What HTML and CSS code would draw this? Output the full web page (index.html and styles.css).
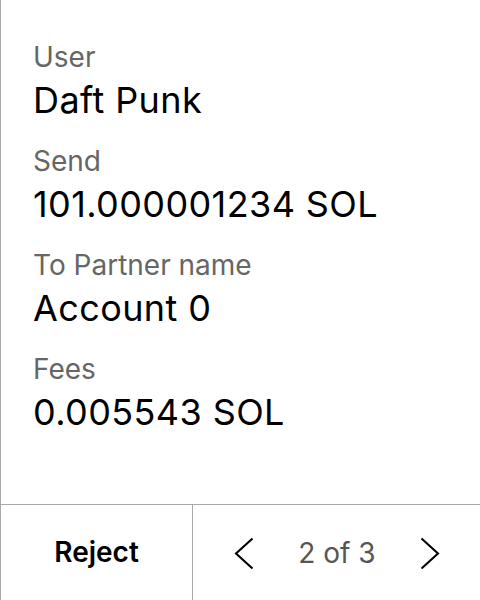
FILE: index.html
```html
<!DOCTYPE html>
<html>
<head>
<meta charset="utf-8">
<link rel="stylesheet" href="styles.css">
</head>
<body>
<div class="screen">
  <div class="fields">
    <div class="field"><div class="label">User</div><div class="value">Daft Punk</div></div>
    <div class="field"><div class="label">Send</div><div class="value">101.000001234 SOL</div></div>
    <div class="field"><div class="label">To Partner name</div><div class="value">Account 0</div></div>
    <div class="field"><div class="label">Fees</div><div class="value">0.005543 SOL</div></div>
  </div>
  <div class="footer">
    <div class="reject">Reject</div>
    <div class="nav">
      <svg class="chev" width="20" height="32" viewBox="0 0 20 32"><path d="M18.5 1.5 L2 16.5 L18.5 31.5" fill="none" stroke="#000" stroke-width="2.1"/></svg>
      <span class="page">2 of 3</span>
      <svg class="chev" width="20" height="32" viewBox="0 0 20 32"><path d="M1.5 1.5 L18 16.5 L1.5 31.5" fill="none" stroke="#000" stroke-width="2.1"/></svg>
    </div>
  </div>
</div>
</body>
</html>
```
FILE: styles.css
```css
html, body { margin: 0; padding: 0; background: #fff; }
body { font-family: Inter, "Noto Sans", sans-serif; color: #000; }
.screen {
  width: 480px; height: 600px; box-sizing: border-box;
  border-left: 1px solid #a8a8a8;
  display: flex; flex-direction: column;
}
.fields { flex: 1; padding: 41px 0 0 32px; display: flex; flex-direction: column; gap: 23px; }
.field { display: flex; flex-direction: column; gap: 5px; }
.label { font-size: 28px; line-height: 32px; color: #666; }
.value { font-size: 36px; line-height: 44px; color: #000; letter-spacing: 0.4px; }
.footer { height: 96px; box-sizing: border-box; border-top: 1px solid #a8a8a8; display: flex; }
.reject { width: 191px; border-right: 1px solid #a8a8a8; display: flex; align-items: center; justify-content: center; font-size: 28px; font-weight: 600; padding-bottom: 2px; }
.nav { flex: 1; display: flex; align-items: center; justify-content: space-between; padding: 0 40px 0 41px; }
.page { font-size: 28px; color: #555; }
```
